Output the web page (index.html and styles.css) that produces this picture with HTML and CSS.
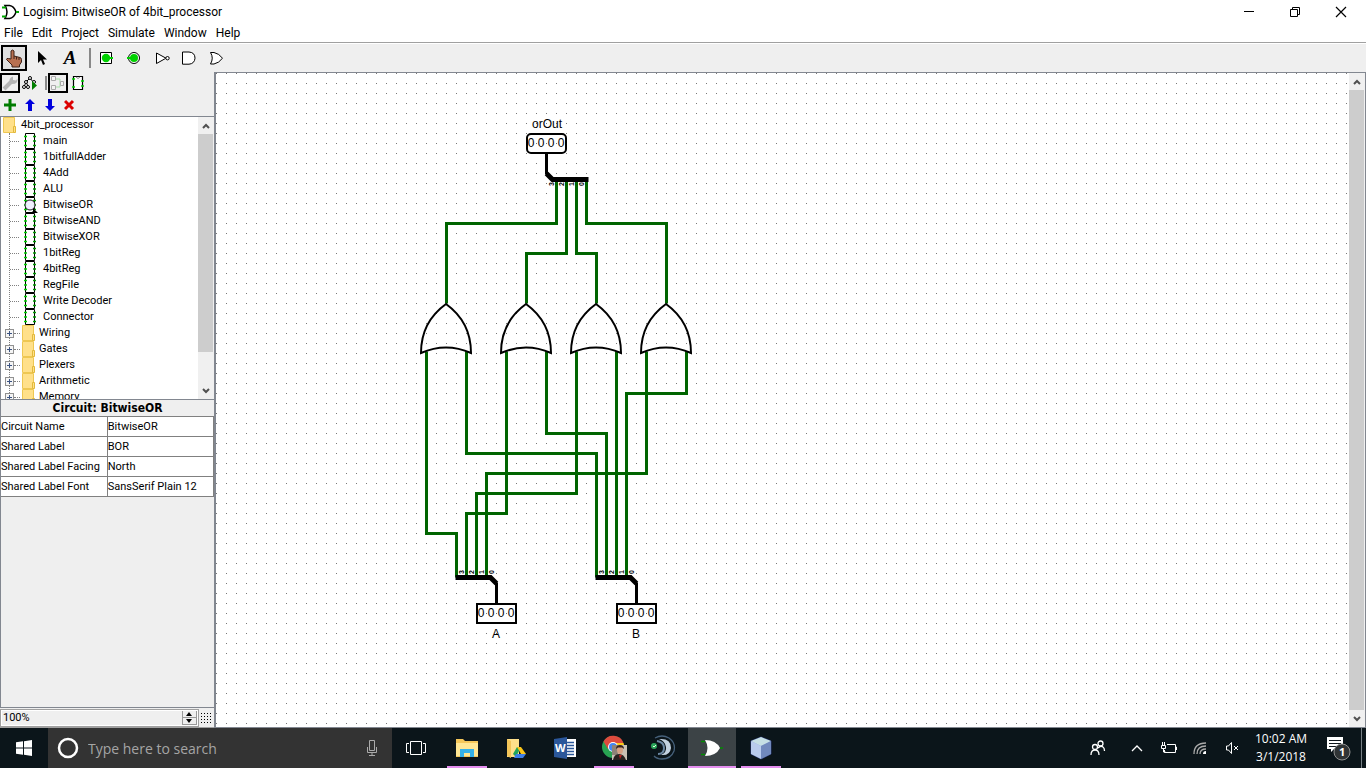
FILE: index.html
```html
<!DOCTYPE html>
<html lang="en">
<head>
<meta charset="utf-8">
<title>Logisim: BitwiseOR of 4bit_processor</title>
<link rel="stylesheet" href="styles.css">
</head>
<body>
<svg class="defs" aria-hidden="true">
  <symbol id="i-circuit" viewBox="0 0 14 16"><path d="M1.500.5h9v15h-9z" fill="#fff" stroke="#000"/><path d="M0 3.500h3M0 8h3M0 12.500h3" stroke="#00d200" stroke-width="1.500"/><path d="M9 3.500h3M9 8h3M9 12.500h3" stroke="#009600" stroke-width="1.500"/></symbol>
  <symbol id="i-folder" viewBox="0 0 13 16"><path d="M.5.5h11v15H.5z" fill="#ffe08a" stroke="#eec752"/><path d="M10.500 15.500v-6h2v6z" fill="#ffe08a" stroke="#e2b93b"/></symbol>
  <symbol id="i-up" viewBox="0 0 8 6"><path d="M1 5l3-3 3 3" fill="none" stroke="#505050" stroke-width="2"/></symbol>
  <symbol id="i-down" viewBox="0 0 8 6"><path d="M1 1l3 3 3-3" fill="none" stroke="#505050" stroke-width="2"/></symbol>
</svg>
<div class="desktop">
<div class="app">
  <header class="titlebar">
    <svg class="logo" width="18" height="16" viewBox="0 0 18 16"><path d="M4 1.500h4.500Q13 2 15 8q-2 6-6.500 6.500H4Q8 8 4 1.500z" fill="#fff" stroke="#000" stroke-width="1.500"/><path d="M1 3.500h4M1 12.500h4M15 8h3" stroke="#00a800" stroke-width="2"/></svg>
    <h1>Logisim: BitwiseOR of 4bit_processor</h1>
    <div class="winctl">
      <button aria-label="Minimize"><svg width="12" height="12"><path d="M1 5.500h10" stroke="#000"/></svg></button>
      <button aria-label="Restore"><svg width="12" height="12"><path d="M1.500 3.500h7v7h-7zM3.500 3.500v-2h7v7h-2" fill="none" stroke="#000"/></svg></button>
      <button aria-label="Close"><svg width="12" height="12"><path d="M1 1l10 10M11 1L1 11" stroke="#000" stroke-width="1.200"/></svg></button>
    </div>
  </header>
  <nav class="menubar"><button>File</button><button>Edit</button><button>Project</button><button>Simulate</button><button>Window</button><button>Help</button></nav>
  <div class="toolbar">
    <button class="on" aria-label="Poke tool"><svg width="20" height="20" viewBox="0 0 20 20"><path d="M7 11V3q1.500-2 3 0v5l6 1.500q1.500.5 1.500 2V14l-2 3v2H8v-2l-5.500-5.500q0-1.500 2-1z" fill="#b87050" stroke="#3d2117"/><path d="M10 8v3M12.500 9v2.500M15 9.500V12" stroke="#3d2117"/></svg></button>
    <button aria-label="Edit tool"><svg width="20" height="20" viewBox="0 0 20 20"><path d="M6 3v12l3-3 2 5 2-1-2-4.500h4z"/></svg></button>
    <button class="lettertool" aria-label="Text tool">A</button>
    <span class="divider"></span>
    <button aria-label="Input pin"><svg width="20" height="20" viewBox="0 0 20 20"><path d="M4.500 4.500h11v11h-11z" fill="#fff" stroke="#000"/><circle cx="10" cy="10" r="4.200" fill="#00d200"/><path d="M14 10h3" stroke="#00d200" stroke-width="2"/></svg></button>
    <button aria-label="Output pin"><svg width="20" height="20" viewBox="0 0 20 20"><circle cx="10" cy="10" r="5.500" fill="#fff" stroke="#000"/><circle cx="10" cy="10" r="4" fill="#00d200"/><path d="M3 10h4" stroke="#00d200" stroke-width="2"/></svg></button>
    <button aria-label="NOT gate"><svg width="20" height="20" viewBox="0 0 20 20"><path d="M4.500 5v10.500L14 10.200z" fill="#fff" stroke="#000"/><circle cx="15.500" cy="10.200" r="1.700" fill="#fff" stroke="#000"/></svg></button>
    <button aria-label="AND gate"><svg width="20" height="20" viewBox="0 0 20 20"><path d="M2.500 4H9q6 .5 6 6.200-.5 5.500-6 6H2.500z" fill="#fff" stroke="#000"/></svg></button>
    <button aria-label="OR gate"><svg width="20" height="20" viewBox="0 0 20 20"><path d="M2.500 4.500H6q5 1 8.500 5.700Q11 15 6 16H2.500q3.500-6 0-11.500z" fill="#fff" stroke="#000"/></svg></button>
  </div>
  <div class="work">
    <aside class="side">
      <div class="views">
        <button class="on" aria-label="Toolbox"><svg width="16" height="16" viewBox="0 0 16 16"><path d="M2 14l7-7" stroke="#b4b4b4" stroke-width="4"/><path d="M8 8Q6 3 11 1.500V5l3 .5 1.500-2Q16 9 10.500 9z" fill="#b4b4b4"/></svg></button>
        <button aria-label="Simulation tree"><svg width="16" height="16" viewBox="0 0 16 16"><path d="M8 3L4 7l-2 5M4 7l2 4M8 3l4 5" stroke="#000" fill="none"/><g fill="#fff" stroke="#000"><circle cx="8" cy="3" r="1.500"/><circle cx="4" cy="7" r="1.500"/><circle cx="2" cy="12" r="1.500"/><circle cx="6" cy="12" r="1.500"/><circle cx="12" cy="7" r="1.500"/></g><path d="M10 6v9l5-4.500z" fill="#008000"/></svg></button>
        <span class="divider"></span>
        <button class="on" aria-label="Edit layout"><svg width="16" height="16" viewBox="0 0 16 16"><path d="M6 4h4v4h2M6 12h4V8" stroke="#a7dfa7" fill="none"/><path d="M1.500 1.500h4v4h-4zM1.500 10.500h4v4h-4zM10.500 6.500h3v4h-3z" fill="#f4f4f4" stroke="#aaa"/></svg></button>
        <button aria-label="Edit appearance"><svg width="16" height="16" viewBox="0 0 16 16"><path d="M3.500 1.500h9v13h-9z" fill="#fff" stroke="#000" stroke-width="1.200"/><path d="M6 2q2 3 4 0" fill="none" stroke="#888"/><path d="M2 4h3M2 12h3M11 6h3M11 11h3" stroke="#00d200" stroke-width="1.500"/></svg></button>
      </div>
      <div class="edits">
        <button aria-label="Add circuit"><svg width="12" height="12"><path d="M6 0v12M0 6h12" stroke="#007c00" stroke-width="3"/></svg></button>
        <button aria-label="Move up"><svg width="12" height="12"><path d="M6 0l5 5H8v7H4V5H1z" fill="#00d"/></svg></button>
        <button aria-label="Move down"><svg width="12" height="12"><path d="M6 12l5-5H8V0H4v7H1z" fill="#00d"/></svg></button>
        <button aria-label="Delete"><svg width="12" height="12"><path d="M1 2l8 8M9 2l-8 8" stroke="#dc0000" stroke-width="3"/></svg></button>
      </div>
      <div class="explorer">
        <div class="tree">
          <div class="root"><svg width="13" height="16"><use href="#i-folder"/></svg>4bit_processor</div>
          <ul>
            <li><svg width="14" height="16"><use href="#i-circuit"/></svg>main</li>
            <li><svg width="14" height="16"><use href="#i-circuit"/></svg>1bitfullAdder</li>
            <li><svg width="14" height="16"><use href="#i-circuit"/></svg>4Add</li>
            <li><svg width="14" height="16"><use href="#i-circuit"/></svg>ALU</li>
            <li><svg width="14" height="16"><use href="#i-circuit"/><circle cx="6" cy="8" r="5" fill="#eef" fill-opacity=".9" stroke="#222"/><path d="M9 11l5 5H7l2-2z"/></svg>BitwiseOR</li>
            <li><svg width="14" height="16"><use href="#i-circuit"/></svg>BitwiseAND</li>
            <li><svg width="14" height="16"><use href="#i-circuit"/></svg>BitwiseXOR</li>
            <li><svg width="14" height="16"><use href="#i-circuit"/></svg>1bitReg</li>
            <li><svg width="14" height="16"><use href="#i-circuit"/></svg>4bitReg</li>
            <li><svg width="14" height="16"><use href="#i-circuit"/></svg>RegFile</li>
            <li><svg width="14" height="16"><use href="#i-circuit"/></svg>Write Decoder</li>
            <li><svg width="14" height="16"><use href="#i-circuit"/></svg>Connector</li>
            <li class="lib"><button aria-label="Expand Wiring"></button><i></i><svg width="13" height="16"><use href="#i-folder"/></svg>Wiring</li>
            <li class="lib"><button aria-label="Expand Gates"></button><i></i><svg width="13" height="16"><use href="#i-folder"/></svg>Gates</li>
            <li class="lib"><button aria-label="Expand Plexers"></button><i></i><svg width="13" height="16"><use href="#i-folder"/></svg>Plexers</li>
            <li class="lib"><button aria-label="Expand Arithmetic"></button><i></i><svg width="13" height="16"><use href="#i-folder"/></svg>Arithmetic</li>
            <li class="lib"><button aria-label="Expand Memory"></button><i></i><svg width="13" height="16"><use href="#i-folder"/></svg>Memory</li>
          </ul>
        </div>
        <div class="scroll"><button aria-label="Scroll up"><svg width="8" height="6"><use href="#i-up"/></svg></button><div class="track"><div class="thumb"></div></div><button aria-label="Scroll down"><svg width="8" height="6"><use href="#i-down"/></svg></button></div>
      </div>
      <div class="attrs">
        <h2>Circuit: BitwiseOR</h2>
        <table>
          <tr><th scope="row">Circuit Name</th><td>BitwiseOR</td></tr>
          <tr><th scope="row">Shared Label</th><td>BOR</td></tr>
          <tr><th scope="row">Shared Label Facing</th><td>North</td></tr>
          <tr><th scope="row">Shared Label Font</th><td>SansSerif Plain 12</td></tr>
        </table>
      </div>
      <div class="zoombar">
        <div class="spinner">
          <input aria-label="Zoom" value="100%">
          <div class="steps"><button aria-label="Zoom in"><svg width="7" height="4"><path d="M0 4h6L3 0z"/></svg></button><button aria-label="Zoom out"><svg width="7" height="4"><path d="M0 0h6L3 4z"/></svg></button></div>
        </div>
        <button class="gridbtn" aria-label="Show grid"><svg width="11" height="11"><path d="M0 .5h11M0 3.500h11M0 6.500h11M0 9.500h11" stroke="#000" stroke-dasharray="1 2"/></svg></button>
      </div>
    </aside>
    <main class="canvas">
      <svg class="sheet" role="img" aria-label="BitwiseOR circuit">
        <defs>
          <pattern id="dots" width="10" height="10" patternUnits="userSpaceOnUse"><path d="M0 0h1v1H0z" fill="#777"/></pattern>
          <g id="or"><path d="M0 0Q-25 18-25 49Q0 38 25 49Q25 18 0 0z" fill="none" stroke="#000" stroke-width="2"/></g>
          <g id="bus" fill="none" stroke="#000"><path d="M-41-26h35l6 6" stroke-width="5"/><path d="M0-21V0" stroke-width="3"/></g>
        </defs>
        <rect width="100%" height="100%" fill="url(#dots)"/>
        <g transform="translate(-215.5 -72.5)">
          <path class="wire" d="M556 180V223H446V303M566 180V253H526V303M576 180V253H596V303M586 180V223H666V303M426 351V533H456V577M466 351V453H596V577M506 351V513H466V577M546 351V433H606V577M576 351V493H476V577M616 351V577M646 351V473H486V577M686 351V393H626V577"/>
          <path d="M546 153v21" stroke="#000" stroke-width="3"/><path d="M546 173l6 6h36" fill="none" stroke="#000" stroke-width="5"/>
          <use href="#bus" x="496" y="603"/><use href="#bus" x="636" y="603"/>
        </g>
        <g transform="translate(-216 -73)">
          <use href="#or" x="446" y="304"/><use href="#or" x="526" y="304"/><use href="#or" x="596" y="304"/><use href="#or" x="666" y="304"/>
          <rect class="pin" x="527" y="134" width="39" height="19" rx="4"/>
          <rect class="pin" x="477" y="604" width="39" height="19"/>
          <rect class="pin" x="617" y="604" width="39" height="19"/>
          <g class="label">
            <text x="547" y="128">orOut</text><text x="496" y="638">A</text><text x="636" y="638">B</text>
            <text x="531" y="147">0</text><text x="541" y="147">0</text><text x="551" y="147">0</text><text x="561" y="147">0</text>
            <text x="481" y="617">0</text><text x="491" y="617">0</text><text x="501" y="617">0</text><text x="511" y="617">0</text>
            <text x="621" y="617">0</text><text x="631" y="617">0</text><text x="641" y="617">0</text><text x="651" y="617">0</text>
          </g>
          <g class="bit">
            <text transform="translate(554 186) rotate(-90)">3</text><text transform="translate(564 186) rotate(-90)">2</text><text transform="translate(574 186) rotate(-90)">1</text><text transform="translate(584 186) rotate(-90)">0</text>
            <text transform="translate(464 574) rotate(-90)">3</text><text transform="translate(474 574) rotate(-90)">2</text><text transform="translate(484 574) rotate(-90)">1</text><text transform="translate(494 574) rotate(-90)">0</text>
            <text transform="translate(604 574) rotate(-90)">3</text><text transform="translate(614 574) rotate(-90)">2</text><text transform="translate(624 574) rotate(-90)">1</text><text transform="translate(634 574) rotate(-90)">0</text>
          </g>
        </g>
      </svg>
      <div class="scroll"><button aria-label="Scroll up"><svg width="8" height="6"><use href="#i-up"/></svg></button><div class="track"><div class="thumb full"></div></div><button aria-label="Scroll down"><svg width="8" height="6"><use href="#i-down"/></svg></button></div>
    </main>
  </div>
</div>
<footer class="taskbar">
  <button class="start" aria-label="Start"><svg width="16" height="16"><path d="M0 2.300L7 1.300V7.500H0zM8 1.200L16 0v7.500H8zM0 8.500h7v6.300l-7-1zM8 8.500h8V16l-8-1.200z" fill="#fff"/></svg></button>
  <label class="search"><svg width="22" height="22"><circle cx="11" cy="11" r="9" fill="none" stroke="#fff" stroke-width="2.500"/></svg><input placeholder="Type here to search" aria-label="Search"><svg width="12" height="18"><path d="M3.500 1.500h5v10h-5zM1.500 8v5.500h9V8M6 13.500v3M3 16.500h6" fill="none" stroke="#aaa"/></svg></label>
  <button class="taskview" aria-label="Task view"><svg width="20" height="16"><path d="M4.500 1.500h11v13h-11zM3 3.500H.5v9H3M17 3.500h2.500v9H17" fill="none" stroke="#fff"/></svg></button>
  <div class="apps">
    <button class="run" aria-label="File Explorer"><svg width="24" height="24" viewBox="0 0 24 24"><path d="M1 3h7l2 2h13v16H1z" fill="#f5c75a"/><path d="M1 7h22v13H1z" fill="#ffe694"/><path d="M5 21v-8h14v8h-4v-4H9v4z" fill="#35b1e8"/></svg></button>
    <button aria-label="Google Drive"><svg width="24" height="24" viewBox="0 0 24 24"><path d="M3 3h12v18H3z" fill="#ffe08a"/><path d="M3 3l4 2v17l-4-2z" fill="#f3c559"/><path d="M13 11h4l-5 10-3-3z" fill="#21a45a"/><path d="M13 11h4l5 7h-5z" fill="#fbc618"/><path d="M12 18h10l-3 4h-9z" fill="#3e7de8"/></svg></button>
    <button aria-label="Word"><svg width="24" height="24" viewBox="0 0 24 24"><path d="M12 3h11v18H12z" fill="#fff"/><path d="M13 6.500h8M13 9.500h8M13 12.500h8M13 15.500h8M13 18.500h8" stroke="#2b579a" stroke-width="1.500"/><path d="M1 3l13-2v22L1 21z" fill="#2b579a"/><text x="2" y="16" class="wordmark">W</text></svg></button>
    <button class="run" aria-label="Chrome"><svg width="28" height="26" viewBox="0 0 28 26"><circle cx="13" cy="12" r="11" fill="#28a352"/><path d="M3.500 6.500A11 11 0 0 1 23.500 8H13l-5 6z" fill="#dd4b3e"/><path d="M14 8h9.500A11 11 0 0 1 13 23l5-9z" fill="#fbc618"/><circle cx="13" cy="12" r="5" fill="#fff"/><circle cx="13" cy="12" r="4" fill="#4285f4"/><path d="M12 10h15v15H12z" fill="#c9c0b4"/><path d="M12 10h6v10h-6z" fill="#8d8377"/><path d="M13 25q1-6 6-6t7 6z" fill="#29221f"/><ellipse cx="20" cy="15" rx="3" ry="4" fill="#d5a184"/><path d="M16 14q0-4 4-4t4 4l-2-1.500h-4z" fill="#38251e"/><path d="M19 20l1 4 2-4z" fill="#b22"/></svg></button>
    <button aria-label="TeamSpeak"><svg width="26" height="26" viewBox="0 0 26 26"><path d="M5 3Q12-1 19 3q7 5 5 13-3 8-12 8-5 0-8-3" fill="none" stroke="#46617b" stroke-width="1.300"/><path d="M9 4q12-1 12 9-1 8-10 7 6-3 5-8-1-6-7-8z" fill="#c3d2e0"/><path d="M7 6q7 1 7 7t-6 6" fill="none" stroke="#6b87a2" stroke-width="2"/><circle cx="4" cy="11" r="3" fill="#2ba45b"/><path d="M3 11l1 1 2-2" fill="none" stroke="#dfd"/></svg></button>
    <button class="run active" aria-label="Logisim"><svg width="24" height="20" viewBox="0 0 24 20"><path d="M5 2q11 0 15 8-4 8-15 8 5-8 0-16z" fill="#fff"/><path d="M1 3.500h4M1 16.500h4M20 10h3" stroke="#008c00" stroke-width="1.500"/></svg></button>
    <button class="run" aria-label="VirtualBox"><svg width="24" height="24" viewBox="0 0 24 24"><path d="M12 1l10 4v13l-10 5-10-5V5z" fill="#8fa8dd" stroke="#28366f"/><path d="M12 1l10 4-10 5L2 5z" fill="#c6dfe5"/><path d="M2 5l10 5v13L2 18z" fill="#b9cbed"/><path d="M12 10l10-5v13l-10 5z" fill="#7189bd"/></svg></button>
  </div>
  <div class="tray">
    <button class="people" aria-label="People"><svg width="16" height="16"><g fill="none" stroke="#fff" stroke-width="1.300"><circle cx="5" cy="7" r="2.500"/><path d="M1 15q0-5 4-5 4 0 4 5"/><circle cx="10.500" cy="3.500" r="2.500"/><path d="M8 8q2.500-3 5-1 1.500 1 1.500 4"/></g></svg></button>
    <button class="more" aria-label="Show hidden icons"><svg width="12" height="8"><path d="M1 7l5-5 5 5" fill="none" stroke="#fff" stroke-width="1.300"/></svg></button>
    <button aria-label="Battery"><svg width="17" height="14"><path d="M7 3.500h8.500v8H4.500V9M15.500 6h1v3M1.500 4.500h4v3h-4zM2.500 1v3M4.500 1v3M3.500 8v3h2" fill="none" stroke="#fff"/></svg></button>
    <button aria-label="Network"><svg width="14" height="14"><g fill="none" stroke="#aaa" stroke-width="1.300"><path d="M1 13Q1 2 13 2M4 13Q4 5 13 5M7 13q0-5 6-5"/></g><path d="M10 13q0-3 3-3v3z" fill="#fff"/></svg></button>
    <button aria-label="Volume"><svg width="15" height="14"><path d="M1.500 5h2l3-3.500v11L3.500 9h-2zM9 5l4 4M13 5L9 9" fill="none" stroke="#fff"/></svg></button>
    <div class="clock"><span>10:02 AM</span><span>3/1/2018</span></div>
    <button class="notes" aria-label="Notifications"><svg width="26" height="26"><path d="M1 2h16v12H8l-3 3v-3H1z" fill="#fff"/><path d="M3 5.500h12M3 8.500h12M3 11.500h8" stroke="#10181d"/><circle cx="16" cy="17" r="8" fill="#303436" stroke="#909090"/><text x="13" y="21">1</text></svg></button>
  </div>
</footer>
</div>
</body>
</html>
```
FILE: styles.css
```css
* { box-sizing: border-box; }
body { margin: 0; background: #fff; color: #000; font: 11px/16px Roboto, "Noto Sans", sans-serif; }
button { display: flex; align-items: center; justify-content: center; margin: 0; padding: 0; border: 0; background: none; color: inherit; font: inherit; }
svg { display: block; flex: none; }
.defs { position: absolute; width: 0; height: 0; }
.desktop { display: flex; flex-direction: column; height: 100vh; }
.app { flex: 1; min-height: 0; display: flex; flex-direction: column; }

.titlebar { display: flex; align-items: center; height: 23px; padding-left: 1px; }
.titlebar h1 { flex: 1; margin: 0 0 0 4px; font-size: 12px; font-weight: 400; }
.winctl { display: flex; padding-right: 2px; }
.winctl button { width: 46px; height: 20px; }
.menubar { display: flex; gap: 9px; height: 20px; padding-left: 4px; border-bottom: 1px solid #a0a0a0; font-size: 12px; }

.toolbar { display: flex; align-items: center; height: 29px; padding-left: 1px; background: #efefef; border-top: 1px solid #fff; }
.toolbar button { width: 28px; height: 26px; }
.toolbar .on { width: 26px; margin-right: 1px; border: 2px solid #000; background: #e0e0e0; }
.toolbar .lettertool { font: italic bold 19px/20px "Liberation Serif", serif; }
.divider { width: 2px; height: 20px; margin: 0 1px 0 5px; background: #888; }

.work { flex: 1; min-height: 0; display: flex; }
.side { width: 216px; display: flex; flex-direction: column; background: #efefef; border-right: 2px solid #828790; }
.views { display: flex; align-items: center; height: 22px; }
.views button { width: 20px; height: 20px; }
.views .on { border: 2px solid #000; }
.views .divider { height: 14px; }
.edits { display: flex; height: 22px; }
.edits button { width: 20px; height: 22px; }

.explorer { display: flex; height: 284px; border: solid #828790; border-width: 1px 0 1px 1px; background: #fff; }
.tree { flex: 1; overflow: hidden; }
.root, .tree li { display: flex; align-items: center; height: 16px; white-space: nowrap; }
.root { gap: 5px; padding-left: 2px; }
.tree ul { margin: 0 0 0 8px; padding: 0; list-style: none; border-left: 1px dotted #808080; }
.tree li { gap: 5px; }
.tree li:not(.lib)::before { content: ""; width: 9px; border-top: 1px dotted #808080; }
.tree .lib { gap: 0; margin-left: -5px; }
.lib button { width: 9px; height: 9px; border: 1px solid #919191; background: linear-gradient(#3b5382, #3b5382) center/5px 1px no-repeat, linear-gradient(#3b5382, #3b5382) center/1px 5px no-repeat, #f5f5f5; }
.lib i { width: 6px; border-top: 1px dotted #808080; }
.lib svg { margin: 0 4px 0 2px; }

.scroll { display: flex; flex-direction: column; width: 16px; background: #f0f0f0; }
.scroll button { height: 17px; }
.track { flex: 1; }
.thumb { height: 88%; margin-right: 1px; background: #cdcdcd; }
.thumb.full { height: 100%; }

.attrs { flex: 1; border-bottom: 1px solid #828790; border-left: 1px solid #828790; }
.attrs h2 { margin: 0; font: bold 12px/16px "DejaVu Sans Condensed", sans-serif; text-align: center; }
.attrs table { width: 100%; border-collapse: collapse; table-layout: fixed; background: #fff; }
.attrs th, .attrs td { height: 20px; padding: 0; border: 1px solid #808080; font-weight: 400; text-align: left; white-space: nowrap; }
.attrs th { border-left: 0; }
.zoombar { display: flex; height: 20px; padding-top: 1px; border-bottom: 1px solid #a0a0a0; }
.spinner { flex: 1; display: flex; padding: 1px; border: 1px solid #a0a0a0; background: #fff; }
.spinner input { flex: 1; min-width: 0; padding: 0 1px; border: 0; background: #efefef; font: inherit; }
.steps { display: flex; flex-direction: column; width: 15px; }
.steps button { flex: 1; border: solid #999; border-width: 0 1px 1px; background: #efefef; }
.gridbtn { width: 15px; height: 18px; }

.canvas { flex: 1; min-width: 0; display: flex; border: solid #828790; border-width: 1px 1px 1px 0; }
.sheet { flex: 1; min-width: 0; height: 100%; }
.wire { fill: none; stroke: #006400; stroke-width: 3; }
.pin { fill: none; stroke: #000; stroke-width: 2; }
.label { font: 12px "Liberation Sans", sans-serif; text-anchor: middle; }
.bit { font: bold 7px "Liberation Sans", sans-serif; }

.taskbar { display: flex; height: 40px; background: #0b151a; color: #fff; font: 12px/18px "Open Sans", sans-serif; }
.start, .taskview { width: 48px; }
.search { display: flex; align-items: center; width: 344px; padding: 0 14px 0 9px; background: #333; }
.search input { flex: 1; min-width: 0; margin-left: 9px; padding: 1px 0 0; border: 0; background: none; color: #fff; font: 14px/20px "Open Sans", sans-serif; }
.search input::placeholder { color: #a5a5a5; opacity: 1; }
.apps { display: flex; flex: 1; gap: 1px; margin-left: 3px; }
.apps button { width: 48px; height: 40px; }
.apps .run { background: linear-gradient(#e48eef, #e48eef) bottom/40px 2px no-repeat; }
.apps .active { background: linear-gradient(#e48eef, #e48eef) bottom/48px 2px no-repeat, #3c4346; }
.wordmark { font: bold 11px "Open Sans", sans-serif; fill: #fff; }
.tray { display: flex; align-items: center; }
.tray button { width: 32px; height: 40px; }
.tray .people { width: 48px; }
.tray .more { width: 30px; }
.clock { display: flex; flex-direction: column; width: 66px; text-align: center; }
.tray .notes { width: 48px; margin-right: 4px; padding-left: 2px; border-right: 1px solid #778085; }
.notes text { font: bold 11px "Open Sans", sans-serif; fill: #fff; }
```
